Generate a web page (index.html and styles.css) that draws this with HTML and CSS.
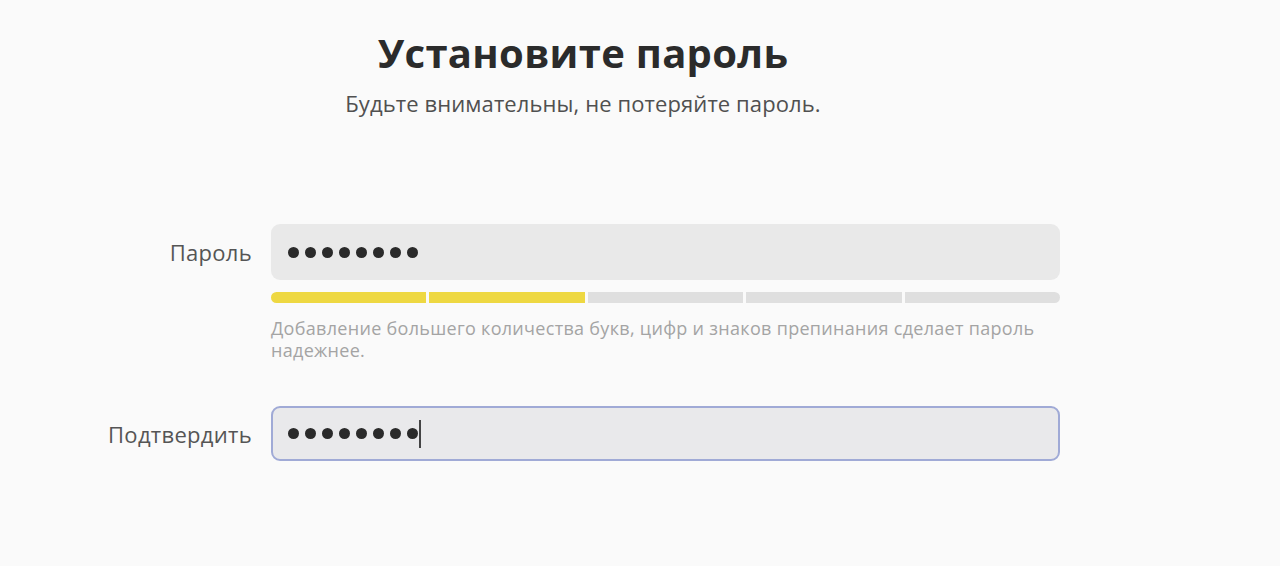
FILE: index.html
```html
<!DOCTYPE html>
<html lang="ru">
<head>
<meta charset="utf-8">
<title>Установите пароль</title>
<link rel="stylesheet" href="styles.css">
</head>
<body>
<main class="page">
  <header class="header">
    <h1 class="title">Установите пароль</h1>
    <p class="subtitle">Будьте внимательны, не потеряйте пароль.</p>
  </header>
  <form class="form">
    <label class="label">Пароль</label>
    <div class="field-group">
      <div class="entry">
        <span class="dots"><i></i><i></i><i></i><i></i><i></i><i></i><i></i><i></i></span>
      </div>
      <div class="strength">
        <span class="seg on"></span><span class="seg on"></span><span class="seg"></span><span class="seg"></span><span class="seg"></span>
      </div>
      <p class="hint">Добавление большего количества букв, цифр и знаков препинания сделает пароль надежнее.</p>
    </div>
    <label class="label">Подтвердить</label>
    <div class="entry focused">
      <span class="dots"><i></i><i></i><i></i><i></i><i></i><i></i><i></i><i></i></span>
      <span class="caret"></span>
    </div>
  </form>
</main>
</body>
</html>
```
FILE: styles.css
```css
html, body {
  margin: 0;
  padding: 0;
  background: #fafafa;
}
body {
  font-family: "Open Sans", "Noto Sans", sans-serif;
  color: #2e2e2e;
  width: 1280px;
  height: 566px;
  overflow: hidden;
}
.page {
  display: flex;
  flex-direction: column;
}
.header {
  width: 1166px;
  text-align: center;
  padding-top: 27px;
}
.title {
  margin: 0;
  font-size: 40px;
  font-weight: 700;
  letter-spacing: 0.3px;
  line-height: 52px;
  color: #2b2b2b;
}
.subtitle {
  margin: 10px 0 0;
  font-size: 22px;
  letter-spacing: 0.1px;
  line-height: 28px;
  color: #505050;
}
.form {
  display: grid;
  grid-template-columns: 252px 789px;
  column-gap: 19px;
  row-gap: 45px;
  margin-top: 107px;
  align-items: start;
}
.label {
  text-align: right;
  font-size: 22px;
  letter-spacing: 0.3px;
  line-height: 56px;
  color: #555;
}
.field-group {
  display: flex;
  flex-direction: column;
}
.entry {
  height: 56px;
  box-sizing: border-box;
  border-radius: 9px;
  background: #e9e9e9;
  display: flex;
  align-items: center;
  padding-left: 17px;
}
.entry.focused {
  background: #e9e9eb;
  border: 2px solid #a0aad6;
  padding-left: 15px;
  height: 55px;
}
.dots {
  display: flex;
  gap: 6px;
}
.dots i {
  display: block;
  width: 11px;
  height: 11px;
  border-radius: 50%;
  background: #2a2a2a;
}
.caret {
  width: 1.5px;
  height: 28px;
  background: #444;
  margin-left: 1px;
}
.strength {
  display: flex;
  gap: 3px;
  margin-top: 12px;
  height: 11px;
  border-radius: 6px;
  overflow: hidden;
}
.seg {
  flex: 1;
  background: #dfdfdf;
}
.seg.on {
  background: #eed842;
}
.hint {
  margin: 14px 0 0;
  font-size: 18px;
  letter-spacing: 0.3px;
  line-height: 22px;
  color: #a4a4a4;
}
```
